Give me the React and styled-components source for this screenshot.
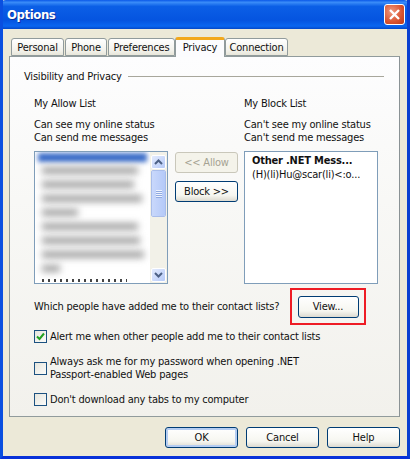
import React from "react";
import styled, { createGlobalStyle } from "styled-components";

const GlobalStyle = createGlobalStyle`
  html, body { margin: 0; padding: 0; background: #0831d9; }
  * { box-sizing: border-box; }
`;

const Dialog = styled.div`
  width: 410px;
  height: 459px;
  display: flex;
  flex-direction: column;
  font-family: "DejaVu Sans Condensed", "DejaVu Sans", sans-serif;
  font-stretch: condensed;
  font-size: 11px;
  letter-spacing: -0.2px;
  line-height: 13px;
  color: #111;
  background: #ece9d8;
  border-left: 3px solid #0a4fe0;
  border-right: 3px solid #0a3fd0;
  border-bottom: 3px solid #0831d9;
  overflow: hidden;
  white-space: nowrap;
`;

const TitleBar = styled.div`
  height: 29px;
  margin: 0 -3px;
  flex: none;
  display: flex;
  align-items: center;
  justify-content: space-between;
  padding: 0 5px 1px 7px;
  background: linear-gradient(180deg, #0a58e8 0%, #3a8cf8 8%, #0b5fe6 22%, #0554e0 70%, #0a66f0 90%, #0347c8 100%);
  border-radius: 6px 6px 0 0;
`;

const Title = styled.span`
  color: #fff;
  font-weight: 700;
  font-size: 13px;
  letter-spacing: -0.4px;
  text-shadow: 1px 1px 0 #0a2f9a;
`;

const CloseBox = styled.div`
  width: 21px;
  height: 21px;
  display: flex;
  align-items: center;
  justify-content: center;
  background: radial-gradient(circle at 35% 35%, #f09a80, #d9532f 60%, #b83a1c);
  border: 1px solid #fff;
  border-radius: 3px;
`;

const Content = styled.div`
  flex: 1;
  display: flex;
  flex-direction: column;
  padding: 7px 7px 0 6px;
`;

const TabRow = styled.div`
  display: flex;
  height: 20px;
  padding-left: 2px;
  align-items: flex-end;
  position: relative;
  z-index: 1;
`;

const Tab = styled.div`
  height: ${(p) => (p.$active ? "20px" : "18px")};
  width: ${(p) => p.$w}px;
  margin-right: ${(p) => p.$gap || 0}px;
  margin-bottom: ${(p) => (p.$active ? "-1px" : "0")};
  display: flex;
  align-items: center;
  justify-content: center;
  border: 1px solid #919b9c;
  border-bottom: ${(p) => (p.$active ? "none" : "1px solid #919b9c")};
  border-top: ${(p) => (p.$active ? "3px solid #f2a81c" : "1px solid #919b9c")};
  border-radius: 3px 3px 0 0;
  background: ${(p) => (p.$active ? "#fcfcfe" : "linear-gradient(180deg, #fff, #f3f2ec 70%, #e8e6da)")};
  padding-bottom: ${(p) => (p.$active ? "2px" : "0")};
`;

const Panel = styled.div`
  width: 391px;
  height: 361px;
  border: 1px solid #919b9c;
  border-right-color: #8a9295;
  background: linear-gradient(180deg, #fdfdfe 0%, #f8f8f6 40%, #f2f1ec 100%);
  padding: 13px 14px 0 14px;
`;

const Group = styled.div`
  display: flex;
  align-items: center;
  justify-content: space-between;
  height: 13px;
  width: 360px;
`;

const RuleLine = styled.div`
  width: 256px;
  height: 1px;
  background: #a8a79c;
`;

const ListGrid = styled.div`
  display: grid;
  grid-template-columns: 134px 76px 134px;
  margin: 14px 0 0 10px;
`;

const Column = styled.div`
  display: flex;
  flex-direction: column;
`;

const Heading = styled.div`
  height: 13px;
  margin-bottom: 8px;
`;

const Note = styled.div`
  height: 26px;
  margin-bottom: 7px;
`;

const ListBox = styled.div`
  height: 133px;
  border: 1px solid #7f9db9;
  background: #fff;
  overflow: hidden;
  display: flex;
`;

const BlurArea = styled.div`
  flex: 1;
  padding: 1px 3px;
  overflow: hidden;
  display: flex;
  flex-direction: column;
`;

const Selected = styled.div`
  height: 14px;
  margin: 0 0 5px;
  background: #3a6cc8;
  filter: blur(2.5px);
`;

const BlurLine = styled.div`
  height: 7px;
  flex: none;
  width: ${(p) => p.$w}px;
  margin: 0 0 7px 4px;
  background: #a2a2a2;
  filter: blur(3.5px);
`;

const ClippedLine = styled.div`
  height: 3px;
  flex: none;
  width: 85px;
  margin-left: 4px;
  background: repeating-linear-gradient(90deg, #444 0 2px, transparent 2px 6px);
`;

const ScrollBar = styled.div`
  width: 17px;
  background: #f2f1e8;
  display: flex;
  flex-direction: column;
  padding: 3px 1px 1px;
`;

const ScrollBtn = styled.div`
  height: 14px;
  flex: none;
  display: flex;
  align-items: center;
  justify-content: center;
  border: 1px solid #fff;
  border-radius: 2px;
  background: linear-gradient(135deg, #e3ebfd, #b6caf8);
`;

const Thumb = styled.div`
  height: 47px;
  margin-top: 1px;
  display: flex;
  flex-direction: column;
  align-items: center;
  justify-content: center;
  gap: 1px;
  border: 1px solid #fff;
  outline: 1px solid #a9bdea;
  outline-offset: -1px;
  border-radius: 2px;
  background: linear-gradient(90deg, #c9d8fb, #b4c9f8);
`;

const Grip = styled.div`
  width: 6px;
  height: 1px;
  background: #eef3fe;
  box-shadow: 0 1px 0 #8fa9e0;
`;

const Spacer = styled.div`
  flex: 1;
`;

const MoveButtons = styled.div`
  display: flex;
  flex-direction: column;
  gap: 8px;
  padding: 55px 0 0 7px;
`;

const Button = styled.div`
  width: ${(p) => p.$w || 63}px;
  height: ${(p) => p.$h || 21}px;
  display: flex;
  align-items: center;
  justify-content: center;
  border: 1px solid ${(p) => (p.$off ? "#c9c7ba" : "#003c74")};
  border-radius: 3px;
  color: ${(p) => (p.$off ? "#a5a292" : "#111")};
  background: ${(p) => (p.$off ? "#f4f3ea" : "linear-gradient(180deg, #fff 0%, #f6f6f0 70%, #dcdad0 100%)")};
  box-shadow: ${(p) => (p.$focus ? "inset 0 0 0 2px #b5cdf2" : "none")};
`;

const BlockEntries = styled.div`
  padding: 2px 0 0 7px;
  line-height: 14px;
`;

const BoldName = styled.div`
  font-weight: 700;
`;

const ContactsRow = styled.div`
  display: flex;
  align-items: center;
  justify-content: space-between;
  margin: 4px 0 0 10px;
  width: 332px;
`;

const Highlight = styled.div`
  width: 76px;
  height: 37px;
  display: flex;
  align-items: center;
  justify-content: center;
  border: 2px solid #ee1c25;
`;

const Options = styled.div`
  display: flex;
  flex-direction: column;
  gap: 12px;
  margin: 5px 0 0 10px;
`;

const OptionRow = styled.div`
  display: flex;
  align-items: center;
  gap: 3px;
`;

const Box = styled.div`
  width: 13px;
  height: 13px;
  flex: none;
  display: flex;
  align-items: center;
  justify-content: center;
  border: 1px solid #1c5180;
  background: linear-gradient(135deg, #e6e5dd, #fbfbf9);
`;

const Footer = styled.div`
  display: flex;
  justify-content: flex-end;
  gap: 8px;
  margin-top: 10px;
`;

const blurred = [96, 92, 100, 36, 96, 98, 102, 18];

export default function App() {
  return (
    <Dialog>
      <GlobalStyle />
      <TitleBar>
        <Title>Options</Title>
        <CloseBox>
          <svg width="13" height="13" viewBox="0 0 13 13">
            <path d="M2 2 L11 11 M11 2 L2 11" stroke="#fff" strokeWidth="2.4" />
          </svg>
        </CloseBox>
      </TitleBar>
      <Content>
        <TabRow>
          <Tab $w={53} $gap={1}>Personal</Tab>
          <Tab $w={42} $gap={1}>Phone</Tab>
          <Tab $w={67}>Preferences</Tab>
          <Tab $w={50} $active>Privacy</Tab>
          <Tab $w={63}>Connection</Tab>
        </TabRow>
        <Panel>
          <Group>
            <span>Visibility and Privacy</span>
            <RuleLine />
          </Group>
          <ListGrid>
            <Column>
              <Heading>My Allow List</Heading>
              <Note>Can see my online status<br />Can send me messages</Note>
              <ListBox>
                <BlurArea>
                  <Selected />
                  {blurred.map((w, i) => (
                    <BlurLine key={i} $w={w} />
                  ))}
                  <ClippedLine />
                </BlurArea>
                <ScrollBar>
                  <ScrollBtn>
                    <svg width="9" height="6" viewBox="0 0 9 6">
                      <path d="M1 5 L4.5 1.5 L8 5" fill="none" stroke="#4d6185" strokeWidth="2" />
                    </svg>
                  </ScrollBtn>
                  <Thumb>
                    <Grip /><Grip /><Grip /><Grip />
                  </Thumb>
                  <Spacer />
                  <ScrollBtn>
                    <svg width="9" height="6" viewBox="0 0 9 6">
                      <path d="M1 1 L4.5 4.5 L8 1" fill="none" stroke="#4d6185" strokeWidth="2" />
                    </svg>
                  </ScrollBtn>
                </ScrollBar>
              </ListBox>
            </Column>
            <MoveButtons>
              <Button $off>&lt;&lt; Allow</Button>
              <Button>Block &gt;&gt;</Button>
            </MoveButtons>
            <Column>
              <Heading>My Block List</Heading>
              <Note>Can't see my online status<br />Can't send me messages</Note>
              <ListBox>
                <BlockEntries>
                  <BoldName>Other .NET Mess...</BoldName>
                  <div>(H)(li)Hu@scar(li)&lt;:o...</div>
                </BlockEntries>
              </ListBox>
            </Column>
          </ListGrid>
          <ContactsRow>
            <span>Which people have added me to their contact lists?</span>
            <Highlight>
              <Button $w={61} $h={22}>View...</Button>
            </Highlight>
          </ContactsRow>
          <Options>
            <OptionRow>
              <Box>
                <svg width="9" height="9" viewBox="0 0 9 9">
                  <path d="M1 4.5 L3.5 7 L8 1.5" fill="none" stroke="#21a121" strokeWidth="2" />
                </svg>
              </Box>
              <span>Alert me when other people add me to their contact lists</span>
            </OptionRow>
            <OptionRow>
              <Box />
              <span>Always ask me for my password when opening .NET<br />Passport-enabled Web pages</span>
            </OptionRow>
            <OptionRow>
              <Box />
              <span>Don't download any tabs to my computer</span>
            </OptionRow>
          </Options>
        </Panel>
        <Footer>
          <Button $w={73} $focus>OK</Button>
          <Button $w={73}>Cancel</Button>
          <Button $w={73}>Help</Button>
        </Footer>
      </Content>
    </Dialog>
  );
}
